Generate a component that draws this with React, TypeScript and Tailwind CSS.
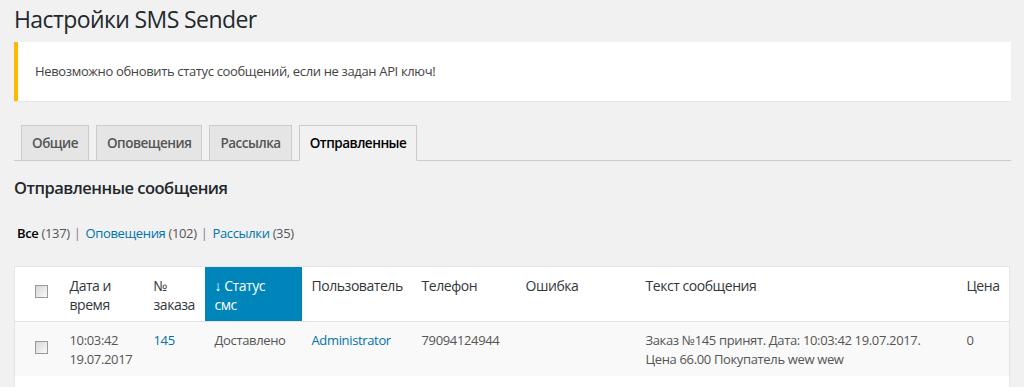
import React from "react";

function Checkbox() {
  return (
    <span className="inline-block w-[13px] h-[13px] border border-[#9a9a9a] bg-linear-to-br from-[#d6d6d6] to-[#fafafa] align-top" />
  );
}

export default function App() {
  const tabs = ["Общие", "Оповещения", "Рассылка", "Отправленные"];
  return (
    <div
      className="min-h-screen bg-[#f1f1f1] pl-[14px] pr-[13px] overflow-hidden tracking-[-0.35px]"
      style={{ fontFamily: '"Open Sans", "Liberation Sans", sans-serif' }}
    >
      <h1 className="pt-[5px] text-[23px] leading-[29px] font-normal text-[#23282d] tracking-[-0.6px]">
        Настройки SMS Sender
      </h1>

      <div className="mt-[8px] h-[59px] flex items-center bg-white border-l-4 border-[#ffb900] pl-[17px] shadow-[0_1px_1px_rgba(0,0,0,0.04)]">
        <p className="text-[13px] leading-[19.5px] text-[#444]">
          Невозможно обновить статус сообщений, если не задан API ключ!
        </p>
      </div>

      <div className="mt-[24px] flex pl-[7px] gap-[7px] border-b border-[#ccc] h-[36px]">
        {tabs.map((t, i) => {
          const active = i === 3;
          return (
            <div
              key={t}
              className={
                "h-[36px] px-[10px] pt-[5px] border border-[#ccc] text-[13.5px] leading-[24px] font-semibold tracking-[-0.5px] " +
                (active
                  ? "bg-[#f1f1f1] border-b-[#f1f1f1] text-black"
                  : "bg-[#e5e5e5] text-[#555]")
              }
            >
              {t}
            </div>
          );
        })}
      </div>

      <h2 className="mt-[15px] text-[16.5px] leading-[23px] font-semibold text-[#23282d] tracking-[-0.5px]">
        Отправленные сообщения
      </h2>

      <div className="mt-[25px] pl-[3px] text-[13px] leading-[19.5px] text-[#666]">
        <span className="font-semibold text-black">Все</span>{" "}
        <span className="text-[#555]">(137)</span>
        <span className="inline-block ml-[4px] mr-[5px] text-[#8a7a88]">|</span>
        <span className="text-[#0073aa]">Оповещения</span>{" "}
        <span className="text-[#555]">(102)</span>
        <span className="inline-block ml-[4px] mr-[5px] text-[#8a7a88]">|</span>
        <span className="text-[#0073aa]">Рассылки</span>{" "}
        <span className="text-[#555]">(35)</span>
      </div>

      <table className="mt-[22px] w-[996px] table-fixed border-collapse border border-[#e5e5e5] bg-white shadow-[0_1px_1px_rgba(0,0,0,0.04)]">
        <colgroup>
          <col className="w-[45px]" />
          <col className="w-[84px]" />
          <col className="w-[61px]" />
          <col className="w-[97px]" />
          <col className="w-[110px]" />
          <col className="w-[104px]" />
          <col className="w-[120px]" />
          <col className="w-[321px]" />
          <col />
        </colgroup>
        <thead>
          <tr className="border-b border-[#e1e1e1] text-[14px] leading-[19.6px] text-[#32373c] text-left align-top tracking-[-0.45px]">
            <th className="h-[55px] pt-[18px] pl-[20px] font-normal">
              <Checkbox />
            </th>
            <th className="h-[55px] pt-[9px] px-[10px] font-normal">
              Дата и<br />время
            </th>
            <th className="h-[55px] pt-[9px] px-[10px] font-normal">
              №<br />заказа
            </th>
            <th className="h-[55px] pt-[9px] px-[10px] font-normal bg-[#0085ba] text-white">
              ↓ Статус<br />смс
            </th>
            <th className="h-[55px] pt-[9px] px-[10px] font-normal">Пользователь</th>
            <th className="h-[55px] pt-[9px] px-[10px] font-normal">Телефон</th>
            <th className="h-[55px] pt-[9px] px-[10px] font-normal">Ошибка</th>
            <th className="h-[55px] pt-[9px] px-[10px] font-normal">Текст сообщения</th>
            <th className="h-[55px] pt-[9px] px-[10px] font-normal">Цена</th>
          </tr>
        </thead>
        <tbody>
          <tr className="bg-[#f9f9f9] text-[13px] leading-[19.5px] text-[#555] align-top">
            <td className="h-[55px] pt-[19px] pl-[20px]">
              <Checkbox />
            </td>
            <td className="pt-[9px] px-[10px]">
              10:03:42<br />19.07.2017
            </td>
            <td className="pt-[9px] px-[10px] text-[#0073aa]">145</td>
            <td className="pt-[9px] px-[10px]">Доставлено</td>
            <td className="pt-[9px] px-[10px] text-[#0073aa]">Administrator</td>
            <td className="pt-[9px] px-[10px]">79094124944</td>
            <td className="pt-[9px] px-[10px]"></td>
            <td className="pt-[9px] px-[10px]">
              Заказ №145 принят. Дата: 10:03:42 19.07.2017.<br />Цена 66.00 Покупатель wew wew
            </td>
            <td className="pt-[9px] px-[10px]">0</td>
          </tr>
          <tr className="bg-white">
            <td className="h-[55px]" colSpan={9}></td>
          </tr>
        </tbody>
      </table>
    </div>
  );
}
